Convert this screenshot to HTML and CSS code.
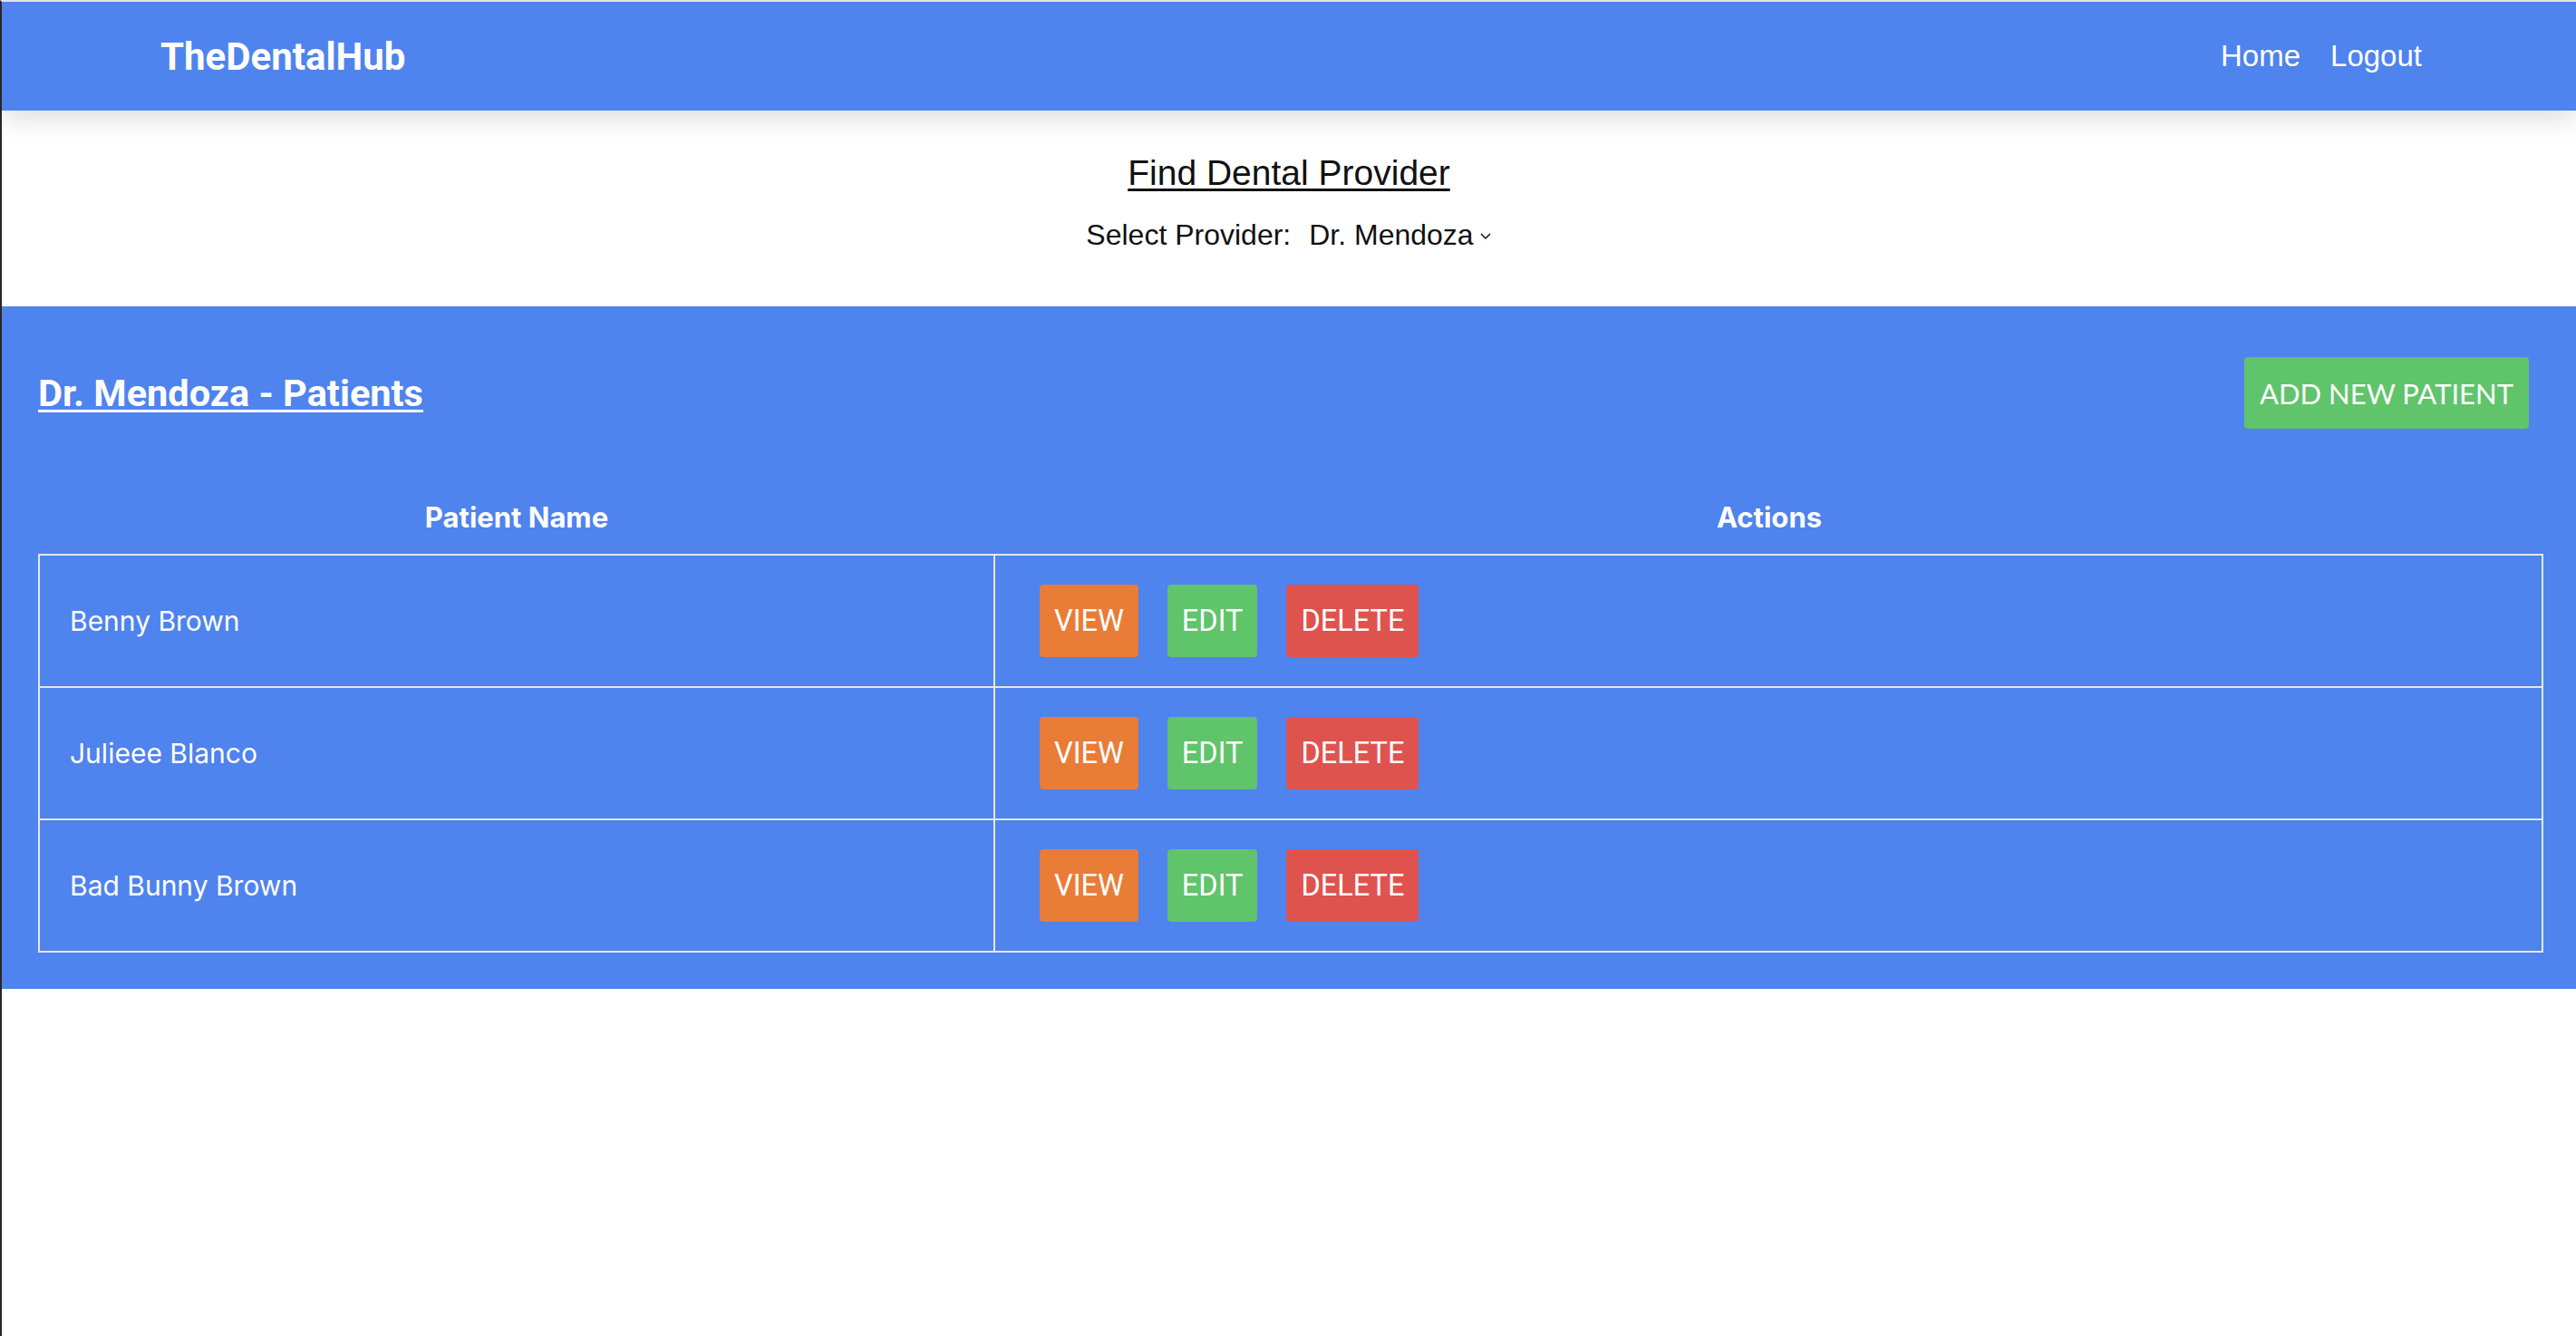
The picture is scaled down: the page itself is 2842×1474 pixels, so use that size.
FILE: index.html
```html
<!DOCTYPE html>
<html lang="en">
<head>
<meta charset="utf-8">
<title>TheDentalHub</title>
<link rel="stylesheet" href="styles.css">
</head>
<body>
<header class="topbar">
  <div class="brand">TheDentalHub</div>
  <nav class="nav">
    <a class="nav-link" href="#">Home</a>
    <a class="nav-link" href="#">Logout</a>
  </nav>
</header>

<section class="finder">
  <h2 class="finder-title">Find Dental Provider</h2>
  <div class="finder-row">
    <span class="finder-label">Select Provider:</span>
    <span class="finder-select">Dr. Mendoza
      <svg class="chev" width="14" height="9" viewBox="0 0 14 9"><path d="M2 2 L7 7 L12 2" fill="none" stroke="#111" stroke-width="1.5"/></svg>
    </span>
  </div>
</section>

<main class="patients">
  <div class="patients-head">
    <h1 class="patients-title">Dr. Mendoza - Patients</h1>
    <button class="btn-add">ADD NEW PATIENT</button>
  </div>
  <table class="ptable">
    <thead>
      <tr>
        <th class="col-name">Patient Name</th>
        <th class="col-actions">Actions</th>
      </tr>
    </thead>
    <tbody>
      <tr>
        <td class="cell-name">Benny Brown</td>
        <td class="cell-actions"><button class="btn btn-orange">VIEW</button><button class="btn btn-green">EDIT</button><button class="btn btn-red">DELETE</button></td>
      </tr>
      <tr>
        <td class="cell-name">Julieee Blanco</td>
        <td class="cell-actions"><button class="btn btn-orange">VIEW</button><button class="btn btn-green">EDIT</button><button class="btn btn-red">DELETE</button></td>
      </tr>
      <tr>
        <td class="cell-name">Bad Bunny Brown</td>
        <td class="cell-actions"><button class="btn btn-orange">VIEW</button><button class="btn btn-green">EDIT</button><button class="btn btn-red">DELETE</button></td>
      </tr>
    </tbody>
  </table>
</main>
</body>
</html>
```

FILE: styles.css
```css
* { box-sizing: border-box; }

html, body { margin: 0; padding: 0; }

body {
  min-height: 100vh;
  background: #ffffff;
  border-left: 2px solid #262626;
  border-top: 2px solid #e3e3e3;
  font-family: "Liberation Sans", Arial, sans-serif;
  color: #111;
}

.topbar {
  position: relative;
  z-index: 2;
  height: 120px;
  background: #4f83ee;
  display: flex;
  align-items: center;
  justify-content: space-between;
  padding: 0 170px 0 175px;
  box-shadow: 0 8px 28px rgba(0, 0, 0, 0.14);
}

.brand {
  font-family: Roboto, "Liberation Sans", sans-serif;
  font-weight: 700;
  font-size: 42px;
  color: #ffffff;
}

.nav { display: flex; gap: 33px; }

.nav-link {
  font-family: "Liberation Sans", Arial, sans-serif;
  font-size: 33px;
  color: #ffffff;
  text-decoration: none;
}

.finder {
  text-align: center;
  padding: 46px 0 60px;
}

.finder-title {
  margin: 0;
  font-size: 39px;
  line-height: 46px;
  font-weight: 400;
  text-decoration: underline;
  text-underline-offset: 4px;
  text-decoration-thickness: 3px;
}

.finder-row {
  margin-top: 26px;
  display: flex;
  justify-content: center;
  align-items: center;
  gap: 20px;
  font-size: 32px;
  line-height: 38px;
}

.finder-select {
  display: inline-flex;
  align-items: center;
  gap: 6px;
}

.chev { margin-top: 3px; }

.patients {
  background: #4f83ee;
  padding: 56px 36px 40px 40px;
  color: #ffffff;
}

.patients-head {
  display: flex;
  align-items: center;
  justify-content: space-between;
  margin-right: 16px;
}

.patients-title {
  margin: 0;
  font-family: Roboto, "Liberation Sans", sans-serif;
  font-weight: 700;
  font-size: 41.5px;
  line-height: 48px;
  text-decoration: underline;
  text-underline-offset: 4px;
  text-decoration-thickness: 3px;
}

.btn-add {
  border: none;
  border-radius: 4px;
  background: #60c46b;
  color: #ffffff;
  font-family: Lato, "Open Sans", sans-serif;
  font-size: 31px;
  font-weight: 400;
  height: 79px;
  padding: 0 17px;
  cursor: pointer;
}

.btn {
  border: none;
  border-radius: 4px;
  color: #ffffff;
  font-family: Roboto, "Liberation Sans", sans-serif;
  font-size: 32.5px;
  font-weight: 400;
  height: 80px;
  padding: 0 16px;
  cursor: pointer;
}

.btn-green { background: #60c46b; }
.btn-orange { background: #e97c37; }
.btn-red { background: #df534f; }

.ptable {
  width: 2764px;
  margin-top: 80px;
  border-collapse: separate;
  border-spacing: 0;
}

.ptable th {
  font-family: Inter, Roboto, sans-serif;
  font-weight: 700;
  font-size: 31px;
  line-height: 36px;
  padding: 0 0 22px;
  text-align: center;
}

.col-name { width: 1056px; }

.ptable td {
  border-bottom: 2px solid #e6e6ea;
  vertical-align: middle;
}

.ptable tbody tr:first-child td { border-top: 2px solid #e6e6ea; }

.cell-name {
  border-left: 2px solid #e6e6ea;
  border-right: 2px solid #e6e6ea;
  padding: 0 0 0 33px;
  font-family: Inter, "Liberation Sans", sans-serif;
  font-size: 30px;
}

.cell-actions {
  border-right: 2px solid #e6e6ea;
  padding: 32px 32px 32px 33px;
}

.cell-actions .btn { margin: 0 16px; }
```
